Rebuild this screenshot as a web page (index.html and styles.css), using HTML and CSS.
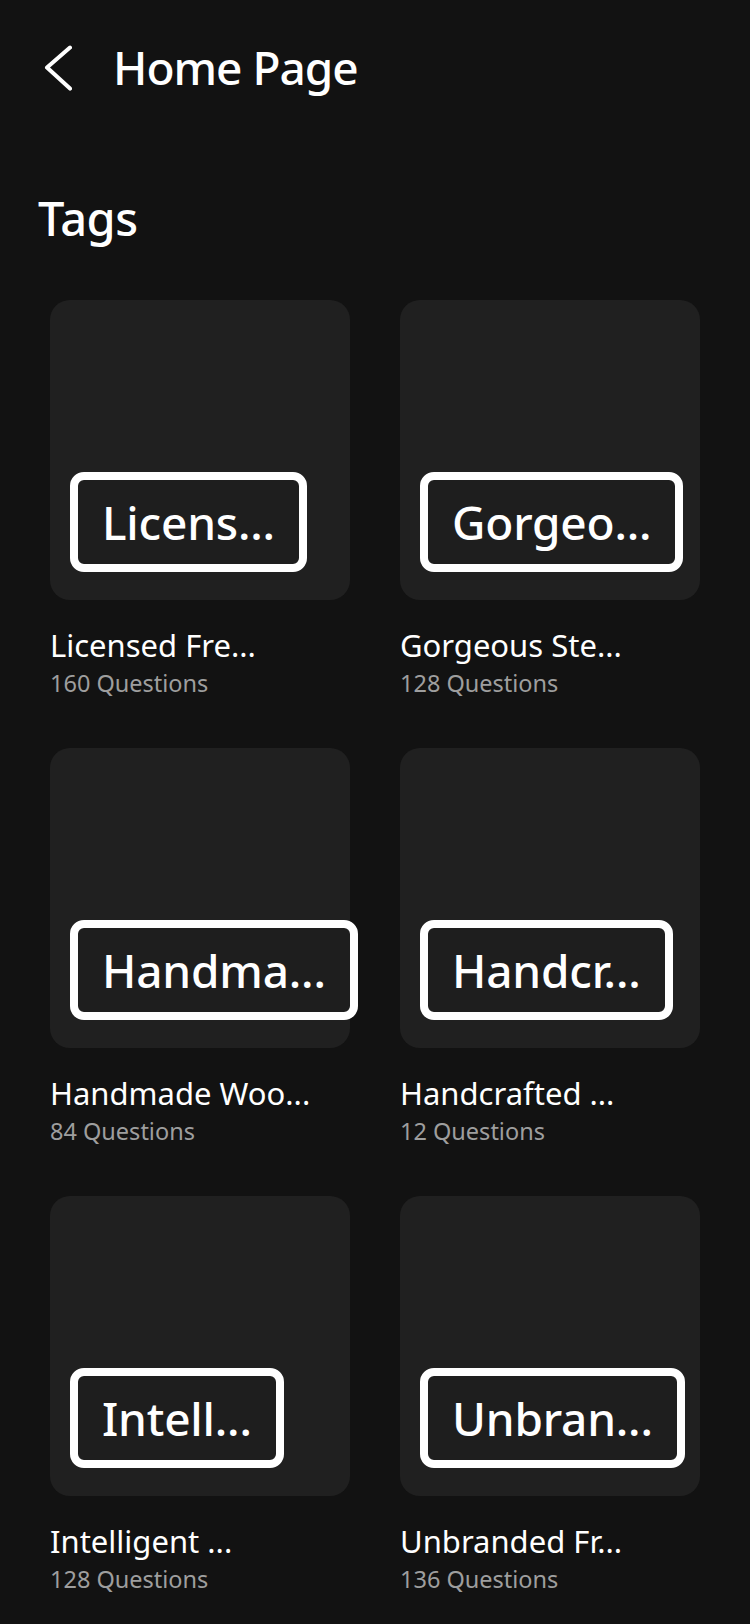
FILE: index.html
```html
<!DOCTYPE html>
<html lang="en">
<head>
    <meta charset="UTF-8">
    <meta name="viewport" content="width=device-width, initial-scale=1.0">
    <title>Tags</title>
    <link rel="stylesheet" href="styles.css">
</head>
<body>
    <div class="header">
        <a class="back" href="#">
            <svg width="32" height="48" viewBox="0 0 32 48">
                <path d="M30 4.6 L7 24.6 L30 45.6" fill="none" stroke="#fff" stroke-width="4" stroke-linecap="round" stroke-linejoin="round"/>
            </svg>
        </a>
        <h1>Home Page</h1>
    </div>

    <h2 class="section-title">Tags</h2>

    <div class="tag-grid">
        <div class="tag">
            <div class="tag-card"><div class="tag-label">Licens...</div></div>
            <div class="tag-name">Licensed Fre...</div>
            <div class="tag-count">160 Questions</div>
        </div>
        <div class="tag">
            <div class="tag-card"><div class="tag-label">Gorgeo...</div></div>
            <div class="tag-name">Gorgeous Ste...</div>
            <div class="tag-count">128 Questions</div>
        </div>
        <div class="tag">
            <div class="tag-card"><div class="tag-label">Handma...</div></div>
            <div class="tag-name">Handmade Woo...</div>
            <div class="tag-count">84 Questions</div>
        </div>
        <div class="tag">
            <div class="tag-card"><div class="tag-label">Handcr...</div></div>
            <div class="tag-name">Handcrafted ...</div>
            <div class="tag-count">12 Questions</div>
        </div>
        <div class="tag">
            <div class="tag-card"><div class="tag-label">Intell...</div></div>
            <div class="tag-name">Intelligent ...</div>
            <div class="tag-count">128 Questions</div>
        </div>
        <div class="tag">
            <div class="tag-card"><div class="tag-label">Unbran...</div></div>
            <div class="tag-name">Unbranded Fr...</div>
            <div class="tag-count">136 Questions</div>
        </div>
    </div>
</body>
</html>
```

FILE: styles.css
```css
body {
    margin: 0;
    background: #121212;
    color: #fff;
    font-family: "Noto Sans", "Open Sans", sans-serif;
}

.header {
    display: flex;
    align-items: center;
    padding: 35px 0 0 40px;
    height: 64px;
}

.back {
    display: flex;
    width: 32px;
    height: 48px;
}

.header h1 {
    margin: 0 0 0 41px;
    font-size: 46px;
    font-weight: 500;
    letter-spacing: -1px;
    line-height: 64px;
}

.section-title {
    margin: 87px 0 0 38px;
    font-size: 47px;
    font-weight: 500;
    letter-spacing: -0.5px;
    line-height: 64px;
}

.tag-grid {
    display: grid;
    grid-template-columns: repeat(2, 300px);
    column-gap: 50px;
    row-gap: 48px;
    padding: 50px 50px 0 50px;
}

.tag-card {
    position: relative;
    width: 300px;
    height: 300px;
    background: #202020;
    border-radius: 20px;
}

/* label sits over the bottom of the card and can run past its edge */
.tag-label {
    position: absolute;
    left: 20px;
    bottom: 28px;
    padding: 0 24px;
    border: 8px solid #fff;
    border-radius: 14px;
    background: #1e1e1e;
    font-size: 46px;
    font-weight: 500;
    letter-spacing: -0.2px;
    line-height: 84px;
    white-space: nowrap;
}

.tag-name {
    margin-top: 25px;
    font-size: 31px;
    line-height: 40px;
    white-space: nowrap;
}

.tag-count {
    margin-top: 1px;
    font-size: 23.5px;
    line-height: 34px;
    color: #9e9e9e;
}
```
